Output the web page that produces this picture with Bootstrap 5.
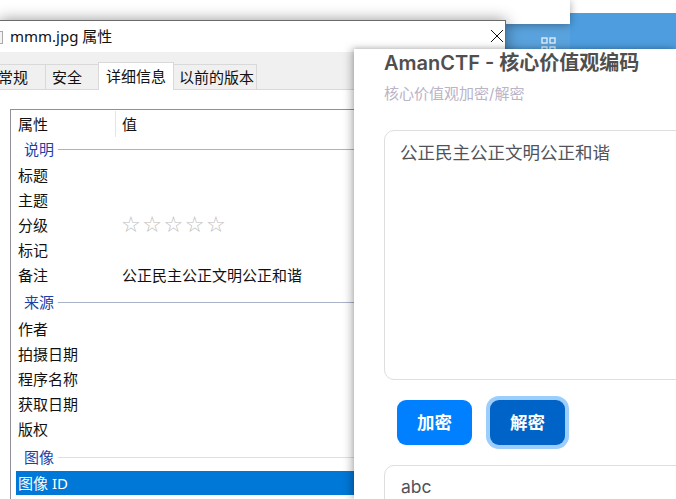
<!DOCTYPE html>
<html lang="zh-CN">
<head>
<meta charset="utf-8">
<title>AmanCTF</title>
<link href="https://cdn.jsdelivr.net/npm/bootstrap@5.3.0/dist/css/bootstrap.min.css" rel="stylesheet">
<style>
html,body{margin:0;padding:0;height:100%;overflow:hidden;background:#fff}
body{font-family:"Liberation Sans","Noto Sans CJK SC",sans-serif;position:relative;width:676px;height:499px}
.desk-blue{position:absolute;left:505px;top:13px;width:171px;height:486px;background:#4d9ddf}
.desk-strip{position:absolute;left:505px;top:24px;width:65px;height:475px;background:#5aa2dd}
.back-win{position:absolute;left:0;top:0;width:570px;height:24px;background:#fff;box-shadow:0 1px 8px rgba(0,0,0,.35)}
.grid-ico{position:absolute;left:541px;top:37px}
.prop-win{position:absolute;left:-1px;top:20px;width:507px;height:479px;background:#fff;border:1px solid #6b6b6b;border-bottom:0;font-family:"Noto Sans","Noto Sans CJK SC",sans-serif;font-size:15px;color:#111;box-shadow:0 0 14px rgba(0,0,0,.42)}
.prop-title{height:31px;padding-left:10px;font-size:15px;line-height:30px;position:relative}
.prop-title .box-ico{position:absolute;left:0;top:10px;width:3px;height:13px;border:1px solid #aaa;border-left:0;background:#f4f4f4}
.x-ico{position:absolute;left:490px;top:8px}
.tab-strip{height:38px;background:#f0f0f0;border-bottom:1px solid #d9d9d9;position:relative;display:flex;align-items:flex-end}
.wtab{height:25px;border:1px solid #d9d9d9;border-bottom:0;line-height:25px;background:#f0f0f0;margin-right:-1px;white-space:nowrap;flex:none}
.wtab-first{width:46px;padding:0 17px 0 0;text-align:right;border-left:0;direction:rtl}
.wtab-sec{width:54px;padding-left:6px}
.wtab-on{background:#fff;height:28px;line-height:26px;margin-bottom:-1px;position:relative;z-index:1;width:76px;padding-left:7px}
.wtab-last{width:84px;padding-left:5px}
.prop-list{position:absolute;left:10px;top:88px;width:496px;height:391px;border:1px solid #8f8f9d;border-bottom:0;border-right:0;padding-left:5px;padding-top:1px}
.hdr-row{height:26px;display:flex;line-height:26px;margin-bottom:6px}
.hdr-a{width:100px;padding-left:2px;border-right:1px solid #e5e5e5}
.hdr-b{padding-left:6px}
.grp{height:13px;display:flex;align-items:center;color:#1c3fa8;line-height:13px;margin-left:8px;margin-bottom:6px}
.grp span{flex:none;width:34px;white-space:nowrap}
.grp i{flex:1;height:1px;background:#aab2c8;margin-left:0}
.p-row{height:25px;line-height:27px;display:flex;padding-left:2px}
.p-row b{font-weight:400;width:104px;flex:none}
.stars{color:#bcbcbc;font-family:"DejaVu Sans",sans-serif;font-size:22px;letter-spacing:1.5px;line-height:25px;margin-left:-1px;white-space:nowrap}
.p-row-sel{background:#0078d7;color:#fff;height:24px;line-height:24px}
.grp-2{margin-top:9px;margin-bottom:7px}
.grp-3{margin-top:10px;margin-bottom:7px}
.grp-3 i{background:#d9dfec}
.app-panel{position:absolute;left:354px;top:49px;width:322px;height:450px;overflow:hidden;background:#fff;box-shadow:-3px 0 8px rgba(0,0,0,.25),0 -1px 4px rgba(0,0,0,.12);padding-left:30px;font-family:Inter,"Noto Sans CJK SC",sans-serif;color:#555}
.app-h{font-size:20px;font-weight:600;line-height:28px;margin:0;height:27px;color:#4f4f4f;white-space:nowrap}
.app-sub{font-size:15px;line-height:20px;color:#b9b4c7;margin-top:8px;margin-bottom:0;white-space:nowrap}
.txt-box{width:320px;height:250px;border:1px solid #dedede;border-radius:10px;margin-top:26px;padding:10px 15px;font-size:17.5px;line-height:24px;color:#50535a;white-space:nowrap}
.act-row{padding:20px 0 0 13px;display:flex;gap:18px;align-items:center}
.act-btn{width:75px;height:45px;border:0;border-radius:9px;background:#0080ff;color:#fff;font-weight:700;font-size:17.5px;line-height:45px;padding:0;box-shadow:none}
.act-btn:hover{background:#0080ff;color:#fff}
.act-on,.act-on:hover{background:#0063c8;box-shadow:0 0 0 4px #9bcdfd}
.txt-box-2{height:80px;margin-top:20px;padding:9px 16px}
</style>
</head>
<body>
<div class="desk-blue"></div>
<div class="desk-strip"></div>
<div class="back-win"></div>
<svg class="grid-ico" width="16" height="16" viewBox="0 0 16 16" fill="none" stroke="#e8f2fb" stroke-width="1.3"><rect x="1" y="1" width="5" height="5"/><rect x="9" y="1" width="5" height="5"/><rect x="1" y="10" width="5" height="5"/><rect x="9" y="10" width="5" height="5"/></svg>

<section class="prop-win">
  <div class="prop-title"><span class="box-ico"></span>mmm.jpg 属性
    <svg class="x-ico" width="14" height="14" viewBox="0 0 14 14" stroke="#111" stroke-width="1" fill="none"><path d="M1 1 13 13M13 1 1 13"/></svg>
  </div>
  <div class="tab-strip">
    <div class="wtab wtab-first">常规</div>
    <div class="wtab wtab-sec">安全</div>
    <div class="wtab wtab-on">详细信息</div>
    <div class="wtab wtab-last">以前的版本</div>
  </div>
  <div class="prop-list">
    <div class="hdr-row"><div class="hdr-a">属性</div><div class="hdr-b">值</div></div>
    <div class="grp"><span>说明</span><i></i></div>
    <div class="p-row"><b>标题</b></div>
    <div class="p-row"><b>主题</b></div>
    <div class="p-row"><b>分级</b><span class="stars">☆☆☆☆☆</span></div>
    <div class="p-row"><b>标记</b></div>
    <div class="p-row"><b>备注</b><span>公正民主公正文明公正和谐</span></div>
    <div class="grp grp-2"><span>来源</span><i></i></div>
    <div class="p-row"><b>作者</b></div>
    <div class="p-row"><b>拍摄日期</b></div>
    <div class="p-row"><b>程序名称</b></div>
    <div class="p-row"><b>获取日期</b></div>
    <div class="p-row"><b>版权</b></div>
    <div class="grp grp-3"><span>图像</span><i></i></div>
    <div class="p-row p-row-sel"><b>图像 ID</b></div>
  </div>
</section>

<main class="app-panel">
  <h1 class="app-h">AmanCTF - 核心价值观编码</h1>
  <p class="app-sub">核心价值观加密/解密</p>
  <div class="txt-box">公正民主公正文明公正和谐</div>
  <div class="act-row">
    <button type="button" class="btn act-btn">加密</button>
    <button type="button" class="btn act-btn act-on">解密</button>
  </div>
  <div class="txt-box txt-box-2">abc</div>
</main>
<script src="https://cdn.jsdelivr.net/npm/bootstrap@5.3.0/dist/js/bootstrap.bundle.min.js"></script>
</body>
</html>
